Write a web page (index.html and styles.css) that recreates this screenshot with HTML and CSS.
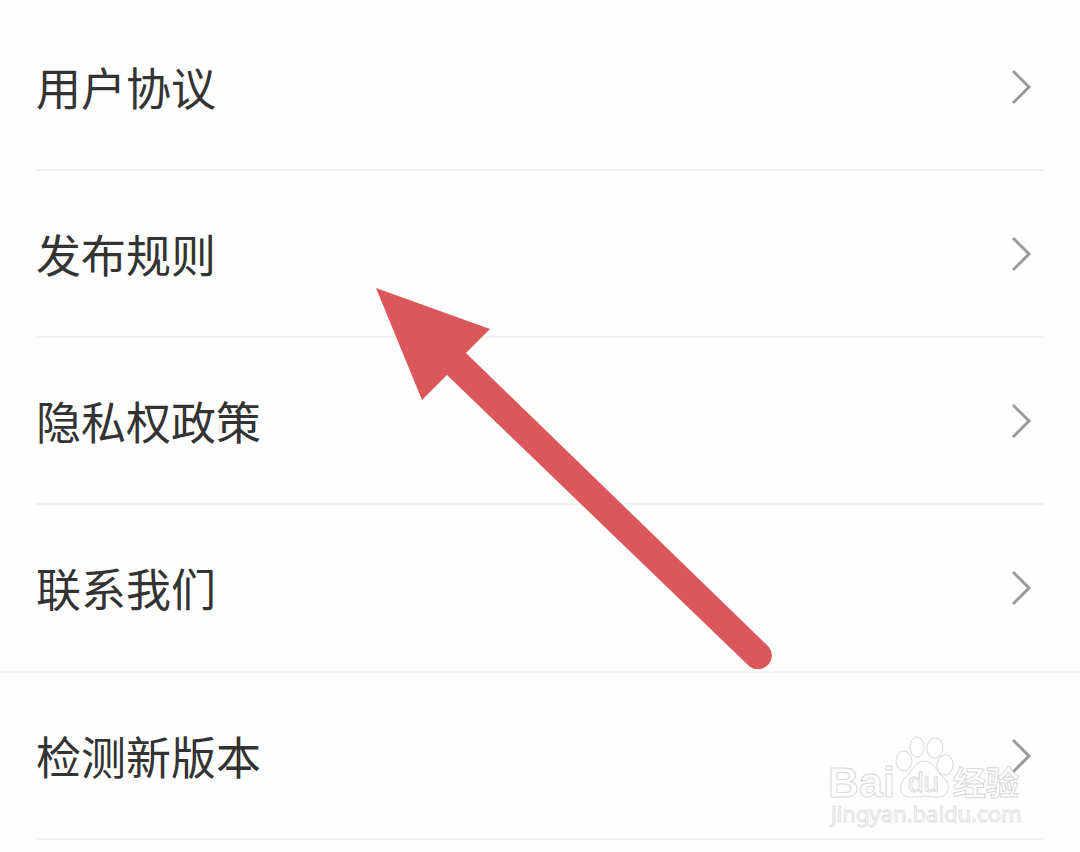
FILE: index.html
```html
<!DOCTYPE html>
<html lang="zh-CN">
<head>
    <meta charset="UTF-8">
    <meta name="viewport" content="width=device-width, initial-scale=1.0">
    <title>设置</title>
    <link rel="stylesheet" href="styles.css">
</head>
<body>
    <main class="page">
        <nav class="menu">
            <a class="menu-item" href="#agreement">
                <span>用户协议</span>
                <svg class="chevron" viewBox="0 0 22 38" aria-hidden="true"><path d="M3 3l16 16L3 35"/></svg>
            </a>
            <a class="menu-item" href="#rules">
                <span>发布规则</span>
                <svg class="chevron" viewBox="0 0 22 38" aria-hidden="true"><path d="M3 3l16 16L3 35"/></svg>
            </a>
            <a class="menu-item" href="#privacy">
                <span>隐私权政策</span>
                <svg class="chevron" viewBox="0 0 22 38" aria-hidden="true"><path d="M3 3l16 16L3 35"/></svg>
            </a>
            <a class="menu-item" href="#contact">
                <span>联系我们</span>
                <svg class="chevron" viewBox="0 0 22 38" aria-hidden="true"><path d="M3 3l16 16L3 35"/></svg>
            </a>
        </nav>
        <nav class="menu menu-version">
            <a class="menu-item" href="#version">
                <span>检测新版本</span>
                <svg class="chevron" viewBox="0 0 22 38" aria-hidden="true"><path d="M3 3l16 16L3 35"/></svg>
            </a>
        </nav>

        <svg class="arrow" viewBox="0 0 400 384" aria-hidden="true">
            <path d="M0 0L114 41L90 65L393 359A14 14 0 0 1 374 379L71 87L46 112Z"/>
        </svg>

        <svg class="watermark" viewBox="0 0 200 100">
            <text class="wm-bai" x="2" y="65">Bai</text>
            <g class="paw">
                <ellipse cx="78" cy="29" rx="8" ry="10"/>
                <ellipse cx="91" cy="15" rx="7" ry="10"/>
                <ellipse cx="109" cy="16" rx="8" ry="10" transform="rotate(8 109 16)"/>
                <ellipse cx="119" cy="33" rx="8" ry="10" transform="rotate(8 119 33)"/>
                <path d="M98 29C106 29 109 36 114 42C119 47 124 51 122 58C120 66 112 66 98 64C85 66 77 66 75 59C73 51 78 47 83 42C88 36 90 29 98 29Z"/>
            </g>
            <text class="wm-du" x="82" y="60">du</text>
            <text class="wm-name" x="127" y="63">经验</text>
            <text class="wm-url" x="5" y="90">jingyan.baidu.com</text>
        </svg>
    </main>
</body>
</html>
```
FILE: styles.css
```css
* {
    box-sizing: border-box;
}

body {
    margin: 0;
    background-color: #fefefe;
    color: #333;
    font-family: "Noto Sans CJK SC", sans-serif;
    overflow-x: hidden;
}

.page {
    position: relative;
    padding-top: 4px;
}

.menu {
    padding: 0 36px;
}

.menu-item {
    display: flex;
    align-items: center;
    justify-content: space-between;
    height: 167px;
    padding-right: 12px;
    border-bottom: 2px solid #f2f2f2;
    color: inherit;
    font-size: 45px;
    line-height: 66px;
    text-decoration: none;
}

.menu .menu-item:last-child {
    border-bottom-color: transparent;
}

.menu-version {
    border-top: 2px solid #f5f5f5;
    margin-top: -1px;
}

.menu-version .menu-item:last-child {
    border-bottom-color: #f2f2f2;
}

.chevron {
    width: 22px;
    height: 38px;
    fill: none;
    stroke: #999;
    stroke-width: 3;
}

/* pointer over the list */
.arrow {
    position: absolute;
    top: 288px;
    left: 376px;
    width: 400px;
    height: 384px;
    fill: #db575c;
    pointer-events: none;
}

.watermark {
    position: absolute;
    top: 732px;
    right: 54px;
    width: 200px;
    height: 100px;
    overflow: visible;
    fill: #fff;
    fill-opacity: 0.6;
    stroke: #d8d8d8;
    stroke-width: 1;
    pointer-events: none;
}

.wm-bai {
    font: bold 43px "Liberation Sans", sans-serif;
}

.wm-du {
    font: 28px "Liberation Sans", sans-serif;
}

.wm-name {
    font: bold 33px "Noto Sans CJK SC", sans-serif;
}

.wm-url {
    font: 22px "Noto Sans", sans-serif;
    stroke: #e0e0e0;
}
```
